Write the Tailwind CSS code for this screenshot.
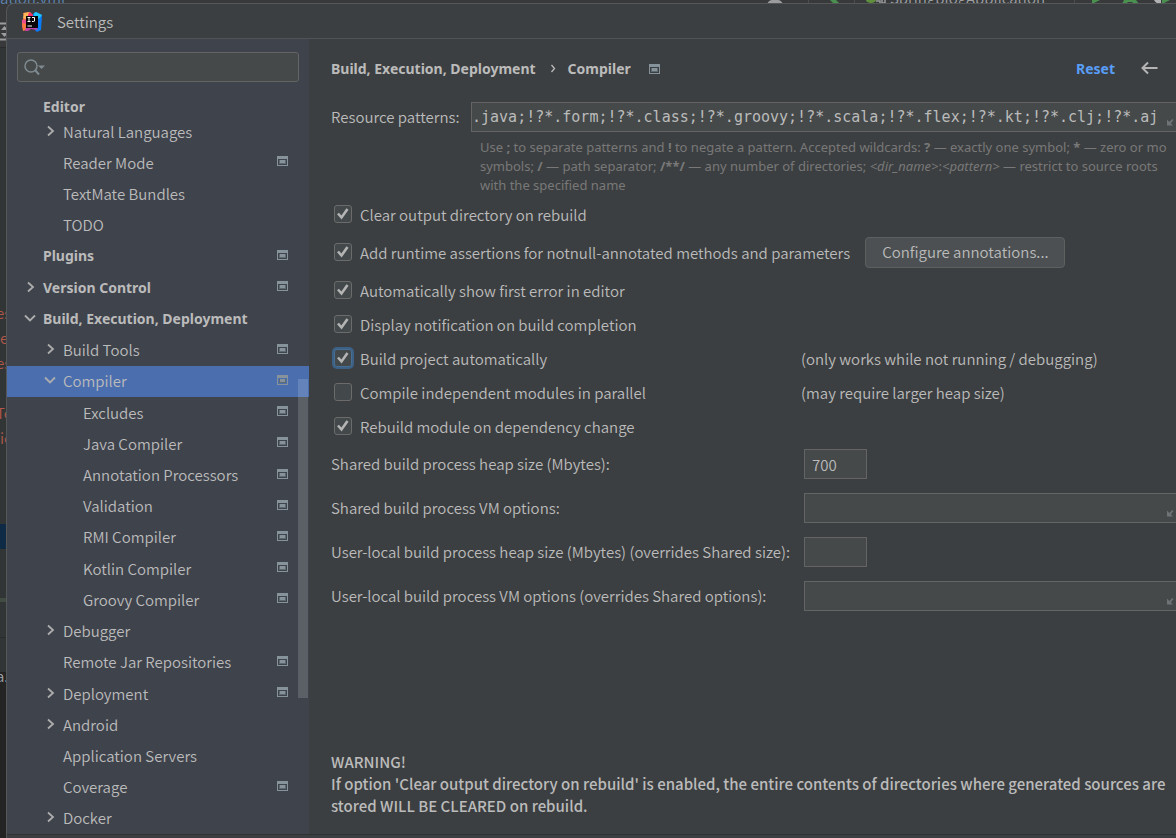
<!DOCTYPE html>
<html lang="en">
<head>
    <meta charset="UTF-8">
    <meta name="viewport" content="width=device-width, initial-scale=1.0">
    <title>Settings</title>
    <script src="https://cdn.jsdelivr.net/npm/@tailwindcss/browser@4"></script>
</head>
<body class="bg-[#313335] font-['Noto_Sans_CJK_KR',sans-serif] text-[15px] leading-5 font-[350] text-[#bbbbbb]">

    <!-- Shared icons -->
    <svg class="hidden">
        <symbol id="right" viewBox="0 0 10 12"><path d="M2 1.5 L7 6 L2 10.5" fill="none" stroke="#adadad" stroke-width="1.8"/></symbol>
        <symbol id="down" viewBox="0 0 12 10"><path d="M1 2.5 L6 7.5 L11 2.5" fill="none" stroke="#adadad" stroke-width="1.8"/></symbol>
        <symbol id="project" viewBox="0 0 11 10">
            <path d="M0 0H11V10H0Z M1 3V9H10V3Z" fill="#87939a" fill-rule="evenodd"/>
            <path d="M2 4H9V8H2Z" fill="#5f6970"/>
            <path d="M3 4H8V7H3Z" fill="#87939a"/>
        </symbol>
        <symbol id="expand" viewBox="0 0 8 8"><path d="M1 1.5V7.5H7L4.8 5.3L7.5 2L6.5 1L3.3 4Z" fill="#6e7375"/></symbol>
        <symbol id="check" viewBox="0 0 18 18"><path d="M4 8.5 L7.5 12.5 L13.5 4" fill="none" stroke="#b4b4b4" stroke-width="2.6"/></symbol>
    </svg>

    <div class="relative flex min-h-screen flex-col overflow-hidden pt-[3px] pl-[6px]">

        <!-- Editor window behind the dialog -->
        <div class="absolute inset-0 overflow-hidden bg-[#323536] text-[#b0574a]" aria-hidden="true">
            <div class="absolute inset-x-0 top-0 h-12 border-b border-[#292b2c] bg-[#37393b]"></div>
            <span class="absolute -top-3 left-0 text-[#5f86b3]">ation.yml</span>
            <svg class="absolute top-[22px] left-0" width="8" height="20"><path d="M0 1.5H8M0 17.5H8" stroke="#9a9c9d" stroke-width="2"/><path d="M1 8L4.5 4L8 8ZM1 11L4.5 15L8 11Z" fill="#9a9c9d"/></svg>
            <span class="absolute top-[303px] -left-1">es</span>
            <span class="absolute top-[328px] left-0">e</span>
            <span class="absolute top-[353px] -left-1">es</span>
            <span class="absolute top-[403px] -left-1">Te</span>
            <span class="absolute top-[428px] left-0">ic</span>
            <div class="absolute top-[524px] left-0 h-[25px] w-3 bg-[#0f2a45]"></div>
            <div class="absolute top-[598px] left-0 h-1 w-3 bg-[#414d42]"></div>
            <div class="absolute top-[637px] left-0 h-px w-3 bg-[#292b2c]"></div>
            <div class="absolute top-[672px] bottom-0 left-0 w-3 bg-[#242424]"></div>
            <span class="absolute top-[666px] -left-1 text-[#9fa2a5]">a.</span>
            <svg class="absolute top-0 left-[750px]" width="426" height="4">
                <path d="M17 4Q19 0 22 0H28Q31 0 33 4Z" fill="#9a9c9d"/>
                <path d="M80 0H86L90 4H84Z" fill="#4a9150"/>
                <path d="M58.500 0V4M104.500 0V4M324.500 0V4" stroke="#4b4d4f"/>
                <ellipse cx="121" cy="0" rx="5" ry="3" fill="#5f8f3c"/>
                <path d="M126 1H130V4M132 0V3H135V0" fill="none" stroke="#9a9c9d" stroke-width="1.500"/>
                <path d="M342 0H350L342 4Z M374 0H386L389 4H384L382 2H378L376 4H372Z M412 0H420L412 4Z" fill="#4a9150"/>
                <path d="M404 0H411V4Q406 4 404 0Z" fill="#b0b2b3"/>
            </svg>
            <span class="absolute -top-3 left-[890px] text-[#9fa2a5]">SpringblogApplication</span>
        </div>

        <!-- Dialog -->
        <div class="relative flex flex-1 flex-col overflow-hidden rounded-tl-lg border-t border-l border-[#555759] bg-[#3c3f41]">
            <header class="flex h-[35px] shrink-0 items-center gap-[15px] border-b border-[#515456] pt-px pl-[15px]">
                <svg width="20" height="20" viewBox="0 0 20 20">
                    <path d="M1 1L8 0L11 3L5 12L0 9L2 5Z" fill="#fc7b3a"/>
                    <path d="M2 1L8 0L6 8L1 6Z" fill="#fdb65a"/>
                    <path d="M7 0L11 3L14 5L5 7Z" fill="#fe2d6f"/>
                    <path d="M11 2L14 0L20 3L19 18L15 20L10 15Z" fill="#087cfa"/>
                    <path d="M12 1L14 0L20 3L17 7L12 5Z" fill="#20c4f5"/>
                    <path d="M0 8L5 7L6 16L1 18L0 14Z" fill="#ec4f8b"/>
                    <path d="M0 11L4 12L4 18L1 19Z" fill="#fc7b3a"/>
                    <path d="M3 19L4 14L14 15L16 18L9 17L6 19Z" fill="#c13fa6"/>
                    <rect x="4" y="4" width="12" height="12" fill="#0a0508"/>
                    <path d="M5.500 5.500H8.500M7 5.500V9.500M5.500 9.500H8.500M10 5.500H12.500V9Q12.500 9.500 11.500 9.500H10M5.500 14H10" fill="none" stroke="#fff" stroke-width="1"/>
                </svg>
                <h1>Settings</h1>
            </header>

            <div class="flex flex-1">
                <!-- Sidebar -->
                <aside class="relative flex w-[302px] shrink-0 flex-col bg-[#3f434c] pt-[13px]">
                    <div class="relative mx-[10px]">
                        <input type="search" aria-label="Search settings" class="block h-[30px] w-full rounded-[3px] border border-[#646464] bg-[#45494a] pr-2 pl-8 outline-none">
                        <svg class="absolute top-[7px] left-[7px]" width="22" height="17" fill="none" stroke="#7f8b91">
                            <circle cx="7" cy="7" r="6" stroke-width="1.500"/><path d="M11 11L15 15.500" stroke-width="2"/><path d="M14 6.500H21L17.500 10Z" fill="#7f8b91" stroke="none"/>
                        </svg>
                    </div>
                    <nav class="mt-4 flex flex-1 flex-col" aria-label="Settings categories">
                        <a href="#" class="flex h-[18px] items-center pl-9 font-['Noto_Sans'] text-sm font-bold">Editor</a>
                        <a href="#" class="flex min-h-[31px] flex-1 items-center pl-9"><svg class="mr-[7px] mb-[2px] ml-[3px] h-3 w-[10px]"><use href="#right"/></svg>Natural Languages</a>
                        <a href="#" class="flex min-h-[31px] flex-1 items-center justify-between pr-[21px] pl-14">Reader Mode<svg class="mb-[3px] h-[10px] w-[11px]"><use href="#project"/></svg></a>
                        <a href="#" class="flex min-h-[31px] flex-1 items-center pl-14">TextMate Bundles</a>
                        <a href="#" class="flex min-h-[31px] flex-1 items-center pl-14">TODO</a>
                        <a href="#" class="flex min-h-[31px] flex-1 items-center justify-between pr-[21px] pl-9 font-['Noto_Sans'] text-sm font-bold">Plugins<svg class="mb-[3px] h-[10px] w-[11px]"><use href="#project"/></svg></a>
                        <a href="#" class="flex min-h-[31px] flex-1 items-center pr-[21px] pl-4 font-['Noto_Sans'] text-sm font-bold"><svg class="mr-[7px] mb-[2px] ml-[3px] h-3 w-[10px]"><use href="#right"/></svg>Version Control<svg class="mb-[3px] ml-auto h-[10px] w-[11px]"><use href="#project"/></svg></a>
                        <a href="#" class="flex min-h-[31px] flex-1 items-center pl-4 font-['Noto_Sans'] text-sm font-bold"><svg class="mr-[7px] mb-[2px] ml-px h-[10px] w-3"><use href="#down"/></svg>Build, Execution, Deployment</a>
                        <a href="#" class="flex min-h-[31px] flex-1 items-center pr-[21px] pl-9"><svg class="mr-[7px] mb-[2px] ml-[3px] h-3 w-[10px]"><use href="#right"/></svg>Build Tools<svg class="mb-[3px] ml-auto h-[10px] w-[11px]"><use href="#project"/></svg></a>
                        <a href="#" aria-current="page" class="flex min-h-[31px] flex-1 items-center bg-[#4b6eaf] pr-[21px] pl-9"><svg class="mr-[7px] mb-[2px] ml-px h-[10px] w-3"><use href="#down"/></svg>Compiler<svg class="mb-[3px] ml-auto h-[10px] w-[11px]"><use href="#project"/></svg></a>
                        <a href="#" class="flex min-h-[31px] flex-1 items-center justify-between pr-[21px] pl-[76px]">Excludes<svg class="mb-[3px] h-[10px] w-[11px]"><use href="#project"/></svg></a>
                        <a href="#" class="flex min-h-[31px] flex-1 items-center justify-between pr-[21px] pl-[76px]">Java Compiler<svg class="mb-[3px] h-[10px] w-[11px]"><use href="#project"/></svg></a>
                        <a href="#" class="flex min-h-[31px] flex-1 items-center justify-between pr-[21px] pl-[76px]">Annotation Processors<svg class="mb-[3px] h-[10px] w-[11px]"><use href="#project"/></svg></a>
                        <a href="#" class="flex min-h-[31px] flex-1 items-center justify-between pr-[21px] pl-[76px]">Validation<svg class="mb-[3px] h-[10px] w-[11px]"><use href="#project"/></svg></a>
                        <a href="#" class="flex min-h-[31px] flex-1 items-center justify-between pr-[21px] pl-[76px]">RMI Compiler<svg class="mb-[3px] h-[10px] w-[11px]"><use href="#project"/></svg></a>
                        <a href="#" class="flex min-h-[31px] flex-1 items-center justify-between pr-[21px] pl-[76px]">Kotlin Compiler<svg class="mb-[3px] h-[10px] w-[11px]"><use href="#project"/></svg></a>
                        <a href="#" class="flex min-h-[31px] flex-1 items-center justify-between pr-[21px] pl-[76px]">Groovy Compiler<svg class="mb-[3px] h-[10px] w-[11px]"><use href="#project"/></svg></a>
                        <a href="#" class="flex min-h-[31px] flex-1 items-center pl-9"><svg class="mr-[7px] mb-[2px] ml-[3px] h-3 w-[10px]"><use href="#right"/></svg>Debugger</a>
                        <a href="#" class="flex min-h-[31px] flex-1 items-center justify-between pr-[21px] pl-14">Remote Jar Repositories<svg class="mb-[3px] h-[10px] w-[11px]"><use href="#project"/></svg></a>
                        <a href="#" class="flex min-h-[31px] flex-1 items-center pr-[21px] pl-9"><svg class="mr-[7px] mb-[2px] ml-[3px] h-3 w-[10px]"><use href="#right"/></svg>Deployment<svg class="mb-[3px] ml-auto h-[10px] w-[11px]"><use href="#project"/></svg></a>
                        <a href="#" class="flex min-h-[31px] flex-1 items-center pl-9"><svg class="mr-[7px] mb-[2px] ml-[3px] h-3 w-[10px]"><use href="#right"/></svg>Android</a>
                        <a href="#" class="flex min-h-[31px] flex-1 items-center pl-14">Application Servers</a>
                        <a href="#" class="flex min-h-[31px] flex-1 items-center justify-between pr-[21px] pl-14">Coverage<svg class="mb-[3px] h-[10px] w-[11px]"><use href="#project"/></svg></a>
                        <a href="#" class="flex min-h-[31px] flex-1 items-center pl-9"><svg class="mr-[7px] mb-[2px] ml-[3px] h-3 w-[10px]"><use href="#right"/></svg>Docker</a>
                    </nav>
                    <!-- Scrollbar thumb -->
                    <div class="absolute top-[340px] right-px h-[319px] w-[10px] bg-white/15"></div>
                </aside>

                <!-- Compiler page -->
                <main class="flex min-w-0 flex-1 flex-col overflow-hidden pt-5 pb-[17px] pl-[22px] whitespace-nowrap">
                    <div class="flex items-center font-['Noto_Sans'] text-sm font-bold">
                        <span>Build, Execution, Deployment</span>
                        <svg class="mr-3 ml-[14px]" width="6" height="10"><path d="M1.500 1L4.500 4.500L1.500 8" fill="none" stroke="#bbbbbb" stroke-width="1.300"/></svg>
                        <span>Compiler</span>
                        <svg class="ml-[18px] h-[10px] w-[11px]"><use href="#project"/></svg>
                        <button type="button" class="ml-auto text-[#589df6]">Reset</button>
                        <button type="button" aria-label="Back" class="mr-[18px] mb-[2px] ml-[26px]"><svg width="17" height="14"><path d="M16.500 7H2M7 1.500L1.500 7L7 12.500" fill="none" stroke="#b4b4b4" stroke-width="2"/></svg></button>
                    </div>

                    <div class="mt-[23px] flex items-center">
                        <label for="patterns" class="w-[140px] shrink-0">Resource patterns:</label>
                        <div class="relative flex-1">
                            <input id="patterns" type="text" value=".java;!?*.form;!?*.class;!?*.groovy;!?*.scala;!?*.flex;!?*.kt;!?*.clj;!?*.aj" class="block h-[30px] w-full border border-r-0 border-[#646464] bg-[#45494a] font-['DejaVu_Sans_Mono',monospace] outline-none">
                            <svg class="absolute right-[2px] bottom-[6px] size-2"><use href="#expand"/></svg>
                        </div>
                    </div>
                    <p class="mt-[6px] ml-[149px] font-['Noto_Sans',sans-serif] text-[13px] leading-[19px] font-normal text-[#787878]">
                        Use <b>;</b> to separate patterns and <b>!</b> to negate a pattern. Accepted wildcards: <b>?</b> — exactly one symbol; <b>*</b> — zero or mo<br>
                        symbols; <b>/</b> — path separator; <b>/**/</b> — any number of directories; <i>&lt;dir_name&gt;</i>:<i>&lt;pattern&gt;</i> — restrict to source roots<br>
                        with the specified name
                    </p>

                    <!-- Options -->
                    <div class="mt-[3px] ml-[3px] flex flex-col">
                        <label class="flex h-[34px] items-center gap-2">
                            <span class="relative mb-[2px]"><input type="checkbox" checked class="peer block size-[18px] appearance-none rounded-[3px] border border-[#6b6b6b] bg-[#43494a]"><svg class="absolute inset-0 hidden size-[18px] peer-checked:block"><use href="#check"/></svg></span>
                            Clear output directory on rebuild
                        </label>
                        <div class="flex h-[42px] items-center gap-[15px]">
                            <label class="flex items-center gap-2">
                                <span class="relative mb-[2px]"><input type="checkbox" checked class="peer block size-[18px] appearance-none rounded-[3px] border border-[#6b6b6b] bg-[#43494a]"><svg class="absolute inset-0 hidden size-[18px] peer-checked:block"><use href="#check"/></svg></span>
                                Add runtime assertions for notnull-annotated methods and parameters
                            </label>
                            <button type="button" class="mb-[2px] h-[31px] rounded-[4px] border border-[#5e6060] bg-[#4c5052] px-4">Configure annotations...</button>
                        </div>
                        <label class="flex h-[34px] items-center gap-2">
                            <span class="relative mb-[2px]"><input type="checkbox" checked class="peer block size-[18px] appearance-none rounded-[3px] border border-[#6b6b6b] bg-[#43494a]"><svg class="absolute inset-0 hidden size-[18px] peer-checked:block"><use href="#check"/></svg></span>
                            Automatically show first error in editor
                        </label>
                        <label class="flex h-[34px] items-center gap-2">
                            <span class="relative mb-[2px]"><input type="checkbox" checked class="peer block size-[18px] appearance-none rounded-[3px] border border-[#6b6b6b] bg-[#43494a]"><svg class="absolute inset-0 hidden size-[18px] peer-checked:block"><use href="#check"/></svg></span>
                            Display notification on build completion
                        </label>
                        <div class="grid h-[34px] grid-cols-[467px_1fr] items-center">
                            <label class="flex items-center gap-2">
                                <span class="relative mb-[2px]"><input type="checkbox" checked class="peer block size-[18px] appearance-none rounded-[3px] border border-[#466d94] bg-[#43494a] ring-2 ring-[#3d6185]"><svg class="absolute inset-0 hidden size-[18px] peer-checked:block"><use href="#check"/></svg></span>
                                Build project automatically
                            </label>
                            <span>(only works while not running / debugging)</span>
                        </div>
                        <div class="grid h-[34px] grid-cols-[467px_1fr] items-center">
                            <label class="flex items-center gap-2">
                                <span class="relative mb-[2px]"><input type="checkbox" class="peer block size-[18px] appearance-none rounded-[3px] border border-[#6b6b6b] bg-[#43494a]"><svg class="absolute inset-0 hidden size-[18px] peer-checked:block"><use href="#check"/></svg></span>
                                Compile independent modules in parallel
                            </label>
                            <span>(may require larger heap size)</span>
                        </div>
                        <label class="flex h-[34px] items-center gap-2">
                            <span class="relative mb-[2px]"><input type="checkbox" checked class="peer block size-[18px] appearance-none rounded-[3px] border border-[#6b6b6b] bg-[#43494a]"><svg class="absolute inset-0 hidden size-[18px] peer-checked:block"><use href="#check"/></svg></span>
                            Rebuild module on dependency change
                        </label>
                    </div>

                    <!-- Build process fields -->
                    <div class="mt-[5px] grid grid-cols-[473px_1fr] items-center gap-y-[14px]">
                        <label for="heap">Shared build process heap size (Mbytes):</label>
                        <input id="heap" type="text" value="700" class="h-[30px] w-[63px] border border-[#646464] bg-[#45494a] px-[7px] outline-none">
                        <label for="vm">Shared build process VM options:</label>
                        <div class="relative">
                            <input id="vm" type="text" class="block h-[30px] w-full border border-r-0 border-[#646464] bg-[#45494a] px-[7px] outline-none">
                            <svg class="absolute right-[2px] bottom-[6px] size-2"><use href="#expand"/></svg>
                        </div>
                        <label for="user-heap">User-local build process heap size (Mbytes) (overrides Shared size):</label>
                        <input id="user-heap" type="text" class="h-[30px] w-[63px] border border-[#646464] bg-[#45494a] px-[7px] outline-none">
                        <label for="user-vm">User-local build process VM options (overrides Shared options):</label>
                        <div class="relative">
                            <input id="user-vm" type="text" class="block h-[30px] w-full border border-r-0 border-[#646464] bg-[#45494a] px-[7px] outline-none">
                            <svg class="absolute right-[2px] bottom-[6px] size-2"><use href="#expand"/></svg>
                        </div>
                    </div>

                    <p class="mt-auto leading-[22px] font-medium">
                        WARNING!<br>
                        If option 'Clear output directory on rebuild' is enabled, the entire contents of directories where generated sources are<br>
                        stored WILL BE CLEARED on rebuild.
                    </p>
                </main>
            </div>
            <footer class="h-1 shrink-0 border-t border-[#323232]"></footer>
        </div>
    </div>

</body>
</html>
